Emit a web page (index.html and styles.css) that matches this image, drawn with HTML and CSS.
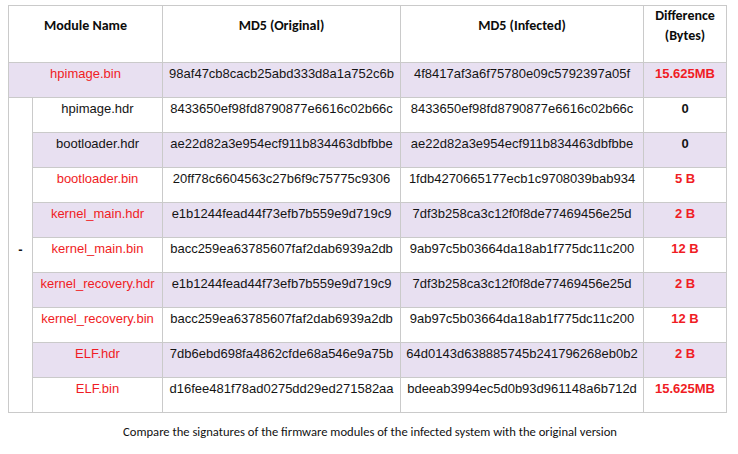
FILE: index.html
```html
<!DOCTYPE html>
<html>
<head>
<meta charset="utf-8">
<link rel="stylesheet" href="styles.css">
</head>
<body>
<div class="page">
<table class="sig">
  <colgroup>
    <col class="c-dash"><col class="c-name"><col class="c-orig"><col class="c-inf"><col class="c-diff">
  </colgroup>
  <thead>
    <tr class="head">
      <th colspan="2">Module Name</th>
      <th>MD5 (Original)</th>
      <th>MD5 (Infected)</th>
      <th>Difference<br>(Bytes)</th>
    </tr>
  </thead>
  <tbody>
    <tr class="alt">
      <td colspan="2" class="name red">hpimage.bin</td>
      <td>98af47cb8cacb25abd333d8a1a752c6b</td>
      <td>4f8417af3a6f75780e09c5792397a05f</td>
      <td class="diff red">15.625MB</td>
    </tr>
    <tr>
      <td rowspan="9" class="dash">-</td>
      <td class="name">hpimage.hdr</td>
      <td>8433650ef98fd8790877e6616c02b66c</td>
      <td>8433650ef98fd8790877e6616c02b66c</td>
      <td class="diff">0</td>
    </tr>
    <tr class="alt">
      <td class="name">bootloader.hdr</td>
      <td>ae22d82a3e954ecf911b834463dbfbbe</td>
      <td>ae22d82a3e954ecf911b834463dbfbbe</td>
      <td class="diff">0</td>
    </tr>
    <tr>
      <td class="name red">bootloader.bin</td>
      <td>20ff78c6604563c27b6f9c75775c9306</td>
      <td>1fdb4270665177ecb1c9708039bab934</td>
      <td class="diff red">5 B</td>
    </tr>
    <tr class="alt">
      <td class="name red">kernel_main.hdr</td>
      <td>e1b1244fead44f73efb7b559e9d719c9</td>
      <td>7df3b258ca3c12f0f8de77469456e25d</td>
      <td class="diff red">2 B</td>
    </tr>
    <tr>
      <td class="name red">kernel_main.bin</td>
      <td>bacc259ea63785607faf2dab6939a2db</td>
      <td>9ab97c5b03664da18ab1f775dc11c200</td>
      <td class="diff red">12 B</td>
    </tr>
    <tr class="alt">
      <td class="name red">kernel_recovery.hdr</td>
      <td>e1b1244fead44f73efb7b559e9d719c9</td>
      <td>7df3b258ca3c12f0f8de77469456e25d</td>
      <td class="diff red">2 B</td>
    </tr>
    <tr>
      <td class="name red">kernel_recovery.bin</td>
      <td>bacc259ea63785607faf2dab6939a2db</td>
      <td>9ab97c5b03664da18ab1f775dc11c200</td>
      <td class="diff red">12 B</td>
    </tr>
    <tr class="alt">
      <td class="name red">ELF.hdr</td>
      <td>7db6ebd698fa4862cfde68a546e9a75b</td>
      <td>64d0143d638885745b241796268eb0b2</td>
      <td class="diff red">2 B</td>
    </tr>
    <tr>
      <td class="name red">ELF.bin</td>
      <td>d16fee481f78ad0275dd29ed271582aa</td>
      <td>bdeeab3994ec5d0b93d961148a6b712d</td>
      <td class="diff red">15.625MB</td>
    </tr>
  </tbody>
</table>
<p class="caption">Compare the signatures of the firmware modules of the infected system with the original version</p>
</div>
</body>
</html>
```

FILE: styles.css
```css
html, body {
  margin: 0;
  padding: 0;
  background: #ffffff;
}

.page {
  padding: 5px 0 0 8px;
  width: 738px;
  box-sizing: border-box;
}

.sig {
  border-collapse: collapse;
  table-layout: fixed;
  width: 718px;
  font-family: "Liberation Sans", Arial, sans-serif;
  font-size: 13px;
  color: #141414;
}

.c-dash { width: 24px; }
.c-name { width: 130px; }
.c-orig { width: 238px; }
.c-inf { width: 243px; }
.c-diff { width: 83px; }

.sig th,
.sig td {
  border: 1px solid #cacaca;
  text-align: center;
  padding: 0;
}

.sig th {
  font-family: Carlito, Lato, "Open Sans", sans-serif;
  font-weight: bold;
  font-size: 14px;
  line-height: 20px;
  height: 56px;
  vertical-align: middle;
  padding-bottom: 16px;
  box-sizing: border-box;
  color: #0c0c0c;
}

.sig tbody tr {
  height: 35px;
}

.sig tbody td {
  vertical-align: top;
  line-height: 16px;
  padding-top: 3px;
  white-space: nowrap;
}

.sig tr.alt td {
  background: #e8e0f1;
}

.sig td.dash {
  background: #ffffff;
  vertical-align: middle;
  padding-top: 0;
  padding-bottom: 10px;
  font-weight: bold;
  font-size: 13px;
  text-align: center;
}

.sig td.diff {
  font-weight: bold;
}

.red {
  color: #f01c24;
}

.caption {
  margin: 11px 0 0 0;
  padding-right: 6px;
  text-align: center;
  font-family: Carlito, Lato, "Open Sans", sans-serif;
  font-size: 12.6px;
  line-height: 16px;
  color: #111;
}
```
